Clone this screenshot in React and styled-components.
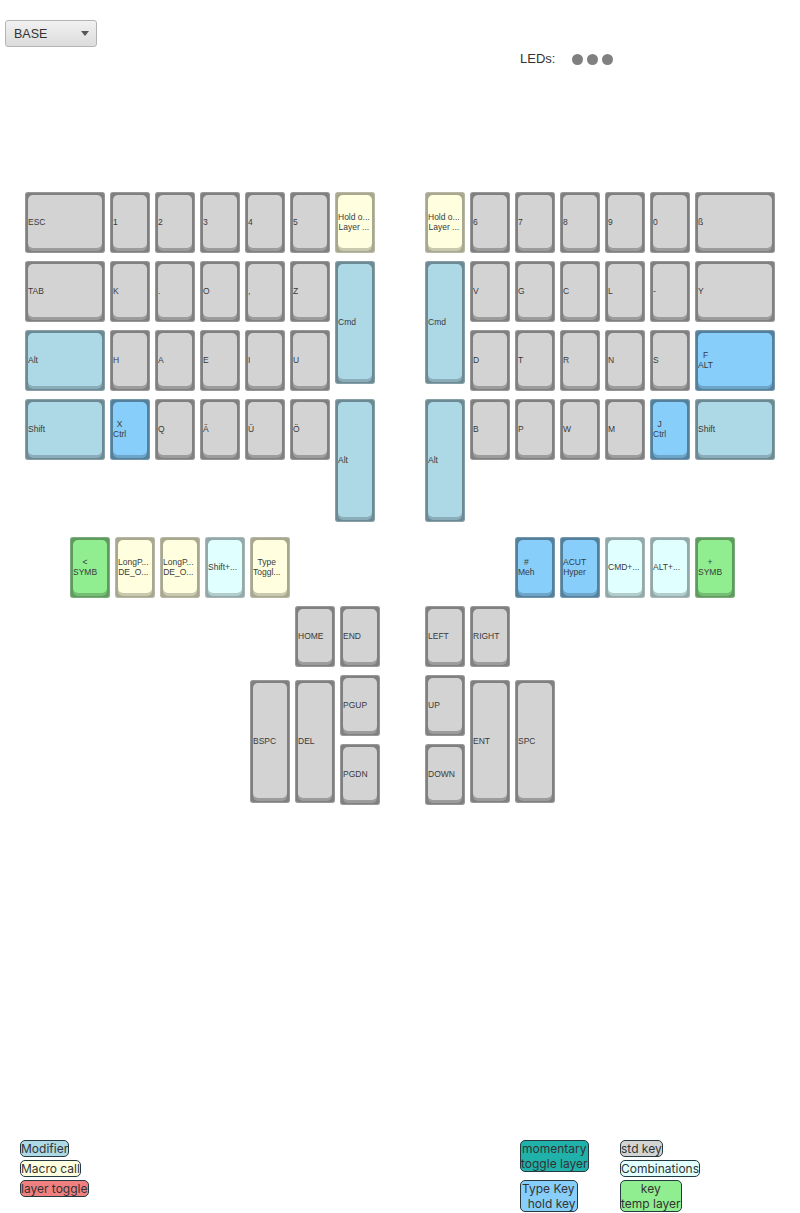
import React from "react";
import styled, { createGlobalStyle } from "styled-components";

const Global = createGlobalStyle`
  html, body { margin: 0; padding: 0; background: #fff; }
  body { font-family: "Liberation Sans", Arial, sans-serif; }
`;

const PALETTE = {
  std: { face: "#d3d3d3", edge: "#808080", hi: "#9c9c9c" },
  mod: { face: "#add8e6", edge: "#6d8a94", hi: "#8aadb9" },
  macro: { face: "#ffffe0", edge: "#a8a890", hi: "#c9c9b0" },
  combo: { face: "#e0ffff", edge: "#93a8a8", hi: "#b3cccc" },
  type: { face: "#87cefa", edge: "#55809c", hi: "#6ca5c8" },
  temp: { face: "#90ee90", edge: "#5f9a5f", hi: "#73be73" },
};

const Page = styled.div`
  width: 800px;
  height: 1213px;
  display: flex;
  flex-direction: column;
  overflow: hidden;
  color: #333;
`;

const TopBar = styled.div`
  display: flex;
  align-items: flex-start;
  height: 192px;
  padding: 20px 0 0 5px;
  box-sizing: border-box;
`;

const LayerSelect = styled.div`
  width: 92px;
  height: 27px;
  box-sizing: border-box;
  display: flex;
  align-items: center;
  justify-content: space-between;
  padding: 0 7px 0 8px;
  border: 1px solid #b4b4b4;
  border-radius: 3px;
  background: linear-gradient(#f1f1f1, #dcdcdc);
  font-size: 12.5px;
  color: #333;
`;

const Caret = styled.span`
  width: 0;
  height: 0;
  border-left: 4.5px solid transparent;
  border-right: 4.5px solid transparent;
  border-top: 5px solid #555;
`;

const Leds = styled.div`
  display: flex;
  align-items: center;
  margin: 32px 0 0 423px;
  font-size: 13px;
  height: 14px;
`;

const LedLabel = styled.span`
  flex: none;
  width: 52px;
  margin-bottom: 2px;
`;

const Led = styled.span`
  width: 11px;
  height: 11px;
  margin-right: 4px;
  border-radius: 50%;
  background: #808080;
`;

const Board = styled.div`
  display: flex;
  align-items: flex-start;
  padding-left: ${(p) => p.$left}px;
  height: ${(p) => p.$height}px;
`;

const Half = styled.div`
  display: grid;
  grid-template-columns: ${(p) => p.$cols};
  grid-auto-rows: 69px;
  width: ${(p) => p.$width}px;
  margin-right: ${(p) => p.$gap || 0}px;
`;

const Cap = styled.div`
  grid-column: ${(p) => p.$col};
  grid-row: ${(p) => p.$row};
  width: ${(p) => p.$w || 40}px;
  height: ${(p) => p.$h || 61}px;
  margin-top: ${(p) => p.$drop || 0}px;
  box-sizing: border-box;
  padding: 3px 3px 5px;
  border-radius: 3px;
  background: ${(p) => PALETTE[p.$kind].edge};
  box-shadow: inset 0 0 0 1px rgba(255, 255, 255, 0.18);
`;

const Face = styled.div`
  height: 100%;
  box-sizing: border-box;
  display: flex;
  align-items: center;
  padding-top: 1px;
  border-radius: 5px;
  background: ${(p) => PALETTE[p.$kind].face};
  box-shadow: 0 3px 0 ${(p) => PALETTE[p.$kind].hi};
`;

const Label = styled.div`
  display: flex;
  flex-direction: column;
  align-items: center;
  font-size: 8.5px;
  line-height: 10px;
  color: #3a3a3a;
  white-space: nowrap;
`;

const Legend = styled.div`
  display: flex;
  align-items: flex-start;
  margin-top: auto;
  height: 73px;
  padding-left: 20px;
  font-family: Inter, "Liberation Sans", sans-serif;
`;

const LegendColumn = styled.div`
  display: flex;
  flex-direction: column;
  align-items: flex-start;
  width: ${(p) => p.$width}px;
`;

const Chip = styled.div`
  background: ${(p) => p.$bg};
  color: #333;
  border: 1px solid #243a40;
  border-radius: 5px;
  font-size: 12px;
  line-height: 15px;
  white-space: pre;
  text-align: center;
  margin-bottom: ${(p) => p.$mb || 3}px;
  padding-right: ${(p) => p.$pr || 0}px;
`;

const k = (col, row, kind, lines, extra = {}) => ({ col, row, kind, lines, ...extra });

const TOP_LEFT = [
  k(1, 1, "std", ["ESC"], { w: 80 }),
  k(2, 1, "std", ["1"]), k(3, 1, "std", ["2"]), k(4, 1, "std", ["3"]), k(5, 1, "std", ["4"]), k(6, 1, "std", ["5"]),
  k(7, 1, "macro", ["Hold o...", "Layer ..."]),
  k(1, 2, "std", ["TAB"], { w: 80 }),
  k(2, 2, "std", ["K"]), k(3, 2, "std", ["."]), k(4, 2, "std", ["O"]), k(5, 2, "std", [","]), k(6, 2, "std", ["Z"]),
  k(7, 2, "mod", ["Cmd"], { h: 123 }),
  k(1, 3, "mod", ["Alt"], { w: 80 }),
  k(2, 3, "std", ["H"]), k(3, 3, "std", ["A"]), k(4, 3, "std", ["E"]), k(5, 3, "std", ["I"]), k(6, 3, "std", ["U"]),
  k(1, 4, "mod", ["Shift"], { w: 80 }),
  k(2, 4, "type", ["X", "Ctrl"]),
  k(3, 4, "std", ["Q"]), k(4, 4, "std", ["Ä"]), k(5, 4, "std", ["Ü"]), k(6, 4, "std", ["Ö"]),
  k(7, 4, "mod", ["Alt"], { h: 123 }),
];

const TOP_RIGHT = [
  k(1, 1, "macro", ["Hold o...", "Layer ..."]),
  k(2, 1, "std", ["6"]), k(3, 1, "std", ["7"]), k(4, 1, "std", ["8"]), k(5, 1, "std", ["9"]), k(6, 1, "std", ["0"]),
  k(7, 1, "std", ["ß"], { w: 80 }),
  k(1, 2, "mod", ["Cmd"], { h: 123 }),
  k(2, 2, "std", ["V"]), k(3, 2, "std", ["G"]), k(4, 2, "std", ["C"]), k(5, 2, "std", ["L"]), k(6, 2, "std", ["-"]),
  k(7, 2, "std", ["Y"], { w: 80 }),
  k(2, 3, "std", ["D"]), k(3, 3, "std", ["T"]), k(4, 3, "std", ["R"]), k(5, 3, "std", ["N"]), k(6, 3, "std", ["S"]),
  k(7, 3, "type", ["F", "ALT"], { w: 80 }),
  k(1, 4, "mod", ["Alt"], { h: 123 }),
  k(2, 4, "std", ["B"]), k(3, 4, "std", ["P"]), k(4, 4, "std", ["W"]), k(5, 4, "std", ["M"]),
  k(6, 4, "type", ["J", "Ctrl"]),
  k(7, 4, "mod", ["Shift"], { w: 80 }),
];

const THUMB_LEFT = [
  k(1, 1, "temp", ["<", "SYMB"]),
  k(2, 1, "macro", ["LongP...", "DE_O..."]),
  k(3, 1, "macro", ["LongP...", "DE_O..."]),
  k(4, 1, "combo", ["Shift+..."]),
  k(5, 1, "macro", ["Type", "Toggl..."]),
  k(6, 2, "std", ["HOME"]), k(7, 2, "std", ["END"]),
  k(5, 3, "std", ["BSPC"], { h: 123, drop: 5 }),
  k(6, 3, "std", ["DEL"], { h: 123, drop: 5 }),
  k(7, 3, "std", ["PGUP"]),
  k(7, 4, "std", ["PGDN"]),
];

const THUMB_RIGHT = [
  k(3, 1, "type", ["#", "Meh"]),
  k(4, 1, "type", ["ACUT", "Hyper"]),
  k(5, 1, "combo", ["CMD+..."]),
  k(6, 1, "combo", ["ALT+..."]),
  k(7, 1, "temp", ["+", "SYMB"]),
  k(1, 2, "std", ["LEFT"]), k(2, 2, "std", ["RIGHT"]),
  k(1, 3, "std", ["UP"]),
  k(1, 4, "std", ["DOWN"]),
  k(2, 3, "std", ["ENT"], { h: 123, drop: 5 }),
  k(3, 3, "std", ["SPC"], { h: 123, drop: 5 }),
];

const Key = ({ col, row, kind, lines, w, h, drop }) => (
  <Cap $col={col} $row={row} $kind={kind} $w={w} $h={h} $drop={drop}>
    <Face $kind={kind}>
      <Label>
        {lines.map((l, i) => (
          <span key={i}>{l}</span>
        ))}
      </Label>
    </Face>
  </Cap>
);

const Keys = ({ list }) => list.map((item, i) => <Key key={i} {...item} />);

export default function App() {
  return (
    <Page>
      <Global />
      <TopBar>
        <LayerSelect>
          BASE
          <Caret />
        </LayerSelect>
        <Leds>
          <LedLabel>LEDs:</LedLabel>
          <Led />
          <Led />
          <Led />
        </Leds>
      </TopBar>
      <Board $left={25} $height={345}>
        <Half $cols="85px repeat(6, 45px)" $width={355} $gap={45}>
          <Keys list={TOP_LEFT} />
        </Half>
        <Half $cols="repeat(7, 45px)" $width={350}>
          <Keys list={TOP_RIGHT} />
        </Half>
      </Board>
      <Board $left={70} $height={275}>
        <Half $cols="repeat(7, 45px)" $width={310} $gap={45}>
          <Keys list={THUMB_LEFT} />
        </Half>
        <Half $cols="repeat(7, 45px)" $width={350}>
          <Keys list={THUMB_RIGHT} />
        </Half>
      </Board>
      <Legend>
        <LegendColumn $width={500}>
          <Chip $bg="#add8e6">Modifier</Chip>
          <Chip $bg="#ffffe0">Macro call</Chip>
          <Chip $bg="#f08080">layer toggle</Chip>
        </LegendColumn>
        <LegendColumn $width={100}>
          <Chip $bg="#20b2aa" $mb={8}>{"momentary\ntoggle layer"}</Chip>
          <Chip $bg="#87cefa" $pr={1}>{"Type Key\n  hold key"}</Chip>
        </LegendColumn>
        <LegendColumn $width={100}>
          <Chip $bg="#d3d3d3" $mb={3}>std key</Chip>
          <Chip $bg="#e0ffff" $mb={3}>Combinations</Chip>
          <Chip $bg="#90ee90">{"key\ntemp layer"}</Chip>
        </LegendColumn>
      </Legend>
    </Page>
  );
}
